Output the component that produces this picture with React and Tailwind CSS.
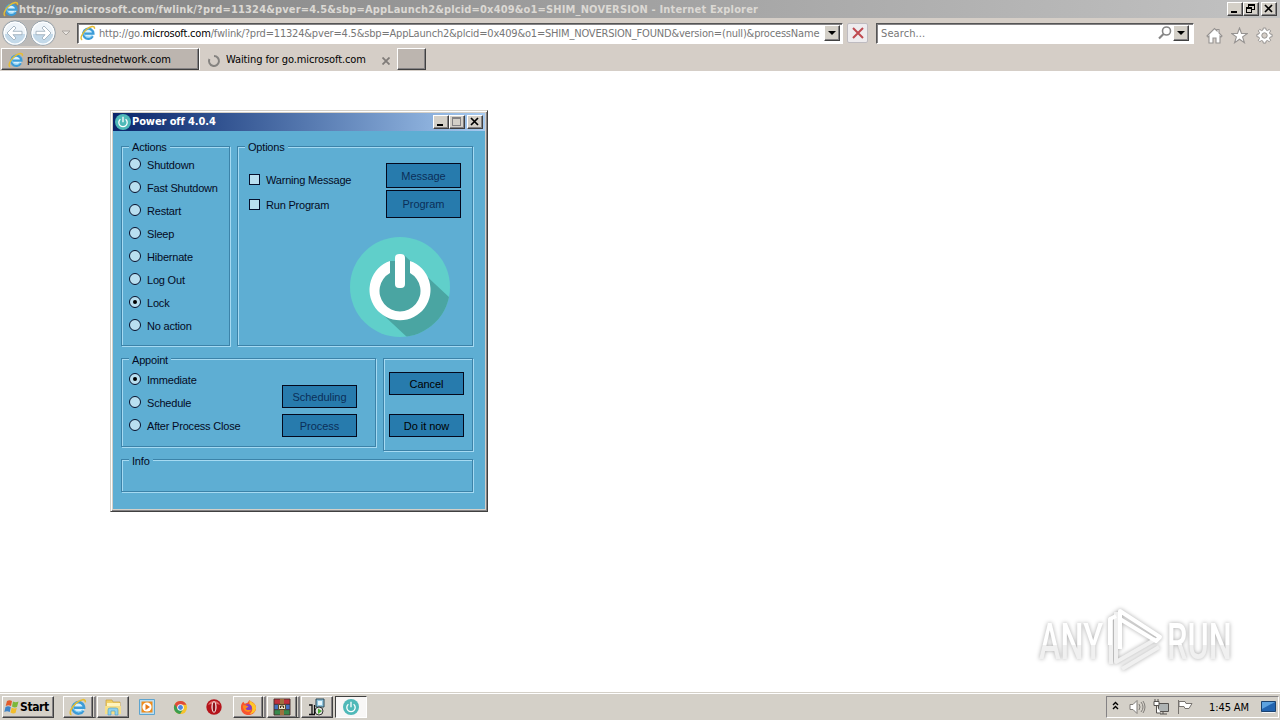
import clsx from 'clsx';

const raised =
  'border border-t-white border-l-white border-r-[#404040] border-b-[#404040] shadow-[inset_-1px_-1px_0_#848284]';

const IeIcon = ({ className }) => (
  <svg viewBox="0 0 16 16" className={className} fill="none">
    <circle cx="8" cy="8.6" r="5.6" fill="#d9f1fc" />
    <path d="M12.800 11.200a5.100 5.100 0 1 1 .6-2.600H4.200" stroke="#3c9cd8" strokeWidth="2.3" />
    <path d="M12.4 10.5A5 5 0 0 1 3.6 7" stroke="#7fcdf3" strokeWidth="0.9" />
    <path d="M2.2 14.8C-.5 14 2 8.4 6.3 4.6 10.3 1 15 .2 14.5 3.8" stroke="#e6bd33" strokeWidth="1.4" />
  </svg>
);

const PowerIcon = ({ className }) => (
  <svg viewBox="0 0 100 100" className={className}>
    <defs>
      <clipPath id="disc">
        <circle cx="50" cy="50" r="50" />
      </clipPath>
    </defs>
    <g clipPath="url(#disc)">
      <rect width="100" height="100" fill="#60cfca" />
      <path d="M54 18 L101 62 L101 101 L58 101 L29 74 L28 37 L44 25 Z" fill="#4aa5a2" />
    </g>
    <path d="M40 24 V36 A20.5 20.5 0 1 0 60 36 V24 A30.5 30.5 0 1 1 40 24" fill="#fff" />
    <path d="M40 24 H60 V38 H40 Z" fill="#4aa5a2" />
    <rect x="45" y="17" width="10" height="34" rx="4" fill="#fff" />
  </svg>
);

const SmallPower = ({ className }) => (
  <svg viewBox="0 0 16 16" className={className} fill="none" stroke="#fff" strokeWidth="1.3">
    <circle cx="8" cy="8" r="8" fill="#4fb9b8" stroke="none" />
    <path d="M5.4 5.2a4.2 4.2 0 1 0 5.2 0M8 2.7v5.5" />
  </svg>
);

const CaptionButton = ({ kind, disabled }) => (
  <div className={clsx('flex h-[14px] w-4 items-center justify-center bg-[#d4d0c8]', raised)}>
    <svg
      viewBox="0 0 12 10"
      className="h-[10px] w-3"
      fill="none"
      stroke={disabled ? '#848284' : '#000'}
      shapeRendering="crispEdges"
    >
      {kind === 'min' && <path d="M2 8h6" strokeWidth="2" />}
      {kind === 'max' && (
        <>
          <path d="M1.5 .5h8v8h-8z" />
          <path d="M1 1.5h9" />
        </>
      )}
      {kind === 'restore' && <path d="M3.5 3V.5h6v5H7M3 1h7M1.5 3.5h5v5h-5zM1 4h6" />}
      {kind === 'close' && <path d="M2 1l7 7M9 1l-7 7" strokeWidth="1.7" shapeRendering="auto" />}
    </svg>
  </div>
);

const DropButton = () => (
  <div className={clsx('flex h-4 w-4 shrink-0 items-center justify-center bg-[#d4d0c8]', raised)}>
    <svg viewBox="0 0 8 4" className="h-1 w-2">
      <path d="M0 0h8L4 4z" />
    </svg>
  </div>
);

const RoundNav = ({ forward }) => (
  <svg viewBox="0 0 26 26" className={clsx('h-[26px] w-[26px]', forward && '-scale-x-100')}>
    <circle cx="13" cy="13" r="12" fill="#eef4f9" stroke="#8d9ba6" />
    <path d="M2 14h22a11 11 0 0 1-22 0" fill="#c3d9e9" />
    <circle cx="13" cy="13" r="11" fill="none" stroke="#fff" strokeWidth="1.2" />
    <path d="M5 13l7-7 2 2-3 3.3h9v3.4h-9l3 3.3-2 2z" fill="#fff" stroke="#98aab8" strokeWidth=".8" />
  </svg>
);

const Browser = () => (
  <header className="flex h-[71px] flex-col bg-[#d5cec7]">
    <div className="flex h-[18px] items-center bg-linear-to-r from-[#828282] to-[#c2c2c2] pl-[3px] pr-[3px]">
      <IeIcon className="h-4 w-4" />
      <span className="grow whitespace-nowrap text-[11px] font-bold leading-[17px] tracking-[0.157px] text-[#dcd9d4]">
        http://go.microsoft.com/fwlink/?prd=11324&amp;pver=4.5&amp;sbp=AppLaunch2&amp;plcid=0x409&amp;o1=SHIM_NOVERSION - Internet Explorer
      </span>
      <div className="flex">
        <CaptionButton kind="min" />
        <CaptionButton kind="restore" />
      </div>
      <div className="ml-[2px]">
        <CaptionButton kind="close" />
      </div>
    </div>

    <div className="flex h-[30px] items-center pl-[2px]">
      <div className="flex rounded-full bg-[#bdbbb9]">
        <RoundNav />
        <div className="ml-[2px]">
          <RoundNav forward />
        </div>
      </div>
      <svg viewBox="0 0 10 6" className="ml-[5px] h-[6px] w-[10px]">
        <path d="M1 1h8L5 5z" fill="#e9e5e1" stroke="#aaa5a0" />
      </svg>
      <div className="ml-[6px] flex h-[21px] w-[766px] items-center border border-b-white border-l-[#555] border-r-white border-t-[#555] bg-white pl-[2px] shadow-[inset_1px_1px_0_#848284]">
        <IeIcon className="h-4 w-4" />
        <span className="ml-[3px] w-[725px] whitespace-nowrap pt-[2px] text-[11px] tracking-[-0.187px] text-[#777]">
          http://go.<span className="text-black">microsoft.com</span>
          /fwlink/?prd=11324&amp;pver=4.5&amp;sbp=AppLaunch2&amp;plcid=0x409&amp;o1=SHIM_NOVERSION_FOUND&amp;version=(null)&amp;processName
        </span>
        <DropButton />
      </div>
      <div className="ml-[4px] flex h-5 w-[21px] items-center justify-center rounded-[2px] border border-[#bebbc0] bg-[#eeecee]">
        <svg viewBox="0 0 12 12" className="h-3 w-3" stroke="#bf4a50" strokeWidth="2">
          <path d="M1 1l10 10M11 1L1 11" />
        </svg>
      </div>
      <div className="ml-2 flex h-[21px] w-[318px] items-center border border-b-white border-l-[#555] border-r-white border-t-[#555] bg-white pl-1 shadow-[inset_1px_1px_0_#848284]">
        <span className="grow pt-[2px] text-[11px] tracking-[0.1px] text-[#777]">Search...</span>
        <svg viewBox="0 0 14 14" className="mr-[1px] h-[14px] w-[14px]" fill="none" stroke="#858585" strokeWidth="1.6">
          <circle cx="8.5" cy="5" r="4" />
          <path d="M5.5 8L1 12.5" strokeWidth="2.2" />
        </svg>
        <DropButton />
        <div className="w-1" />
      </div>
      <div className="ml-[12px] mt-1 flex gap-2">
        <svg viewBox="0 0 17 17" className="h-[17px] w-[17px]" fill="#fff" stroke="#969391" strokeWidth="1.1">
          <path d="M1 9l7.5-7.5L11 4V2.5h2V6l3 3-1 1-1-.8V16h-4v-5H7v5H3V9.2L2 10z" />
        </svg>
        <svg viewBox="0 0 17 17" className="h-[17px] w-[17px]" fill="#fff" stroke="#969391" strokeWidth="1.1">
          <path d="M8.5 1l2 5.5h5.8l-4.7 3.4 1.8 5.8-4.9-3.5-4.9 3.5 1.8-5.8L.7 6.5h5.8z" />
        </svg>
        <svg viewBox="0 0 17 17" className="h-[17px] w-[17px]" fill="#fff" stroke="#969391">
          <path d="M7.3 1h2.4l.4 2 1.4.6 1.7-1.2 1.5 1.5L13.5 5.6l.6 1.4 2 .4v2.3l-2 .4-.6 1.4 1.2 1.7-1.5 1.5-1.7-1.2-1.4.6-.4 2H7.3l-.4-2-1.4-.6-1.7 1.2-1.5-1.5 1.2-1.7-.6-1.4-2-.4V7.4l2-.4.6-1.4-1.2-1.7 1.5-1.5 1.7 1.2L6.9 3z" />
          <circle cx="8.5" cy="8.5" r="2.7" fill="#d5cec7" />
        </svg>
      </div>
    </div>

    <div className="flex h-[23px] pl-px text-[11px] text-black">
      <div className={clsx('flex h-[22px] w-[198px] items-center bg-[#bcb5af] pl-[6px]', raised)}>
        <IeIcon className="mt-[2px] h-4 w-4" />
        <span className="ml-[3px] pt-[3px] tracking-[-0.14px]">profitabletrustednetwork.com</span>
      </div>
      <div className="flex h-[22px] w-[198px] items-center border-l border-white pl-[7px] pt-[3px]">
        <svg viewBox="0 0 14 14" className="h-[14px] w-[14px]" fill="none" stroke="#858380" strokeWidth="2">
          <path d="M7 2a5 5 0 1 1-4.6 3" />
        </svg>
        <span className="ml-[5px] grow tracking-[-0.1px]">Waiting for go.microsoft.com</span>
        <svg viewBox="0 0 8 8" className="mr-[7px] h-2 w-2" stroke="#807c79" strokeWidth="1.8">
          <path d="M.5 .5l7 7M7.5 .5l-7 7" />
        </svg>
      </div>
      <div className={clsx('h-[22px] w-[29px] bg-[#bcb5af]', raised)} />
    </div>
  </header>
);

const GroupBox = ({ label, labelClass = '-mt-[7px]', className, children }) => (
  <section
    className={clsx(
      'flex flex-col border border-[#3c83a9] shadow-[1px_1px_0_#a5daf2,inset_1px_1px_0_#a5daf2]',
      className,
    )}
  >
    {label && (
      <h2 className={clsx('ml-[7px] h-[14px] w-fit bg-[#5eaed3] px-[3px] leading-[14px]', labelClass)}>{label}</h2>
    )}
    {children}
  </section>
);

const Radio = ({ label, checked }) => (
  <div className="flex h-[23px] items-center">
    <span className="mb-[2px] flex h-3 w-3 items-center justify-center rounded-full border border-[#06102c] bg-[#b9dff0]">
      {checked && <span className="h-1 w-1 rounded-full bg-black" />}
    </span>
    <span className="ml-[6px]">{label}</span>
  </div>
);

const Checkbox = ({ label }) => (
  <div className="flex h-[25px] items-center">
    <span className="h-[11px] w-[11px] border border-[#06102c] bg-[#b9dff0]" />
    <span className="ml-[6px]">{label}</span>
  </div>
);

const FlatButton = ({ label, disabled, className }) => (
  <button
    className={clsx(
      'block w-[75px] border border-[#03081c] bg-[#277bad] tracking-[-0.05px]',
      disabled ? 'text-[#0b2f59]' : 'text-black',
      className,
    )}
  >
    {label}
  </button>
);

const actions = ['Shutdown', 'Fast Shutdown', 'Restart', 'Sleep', 'Hibernate', 'Log Out', 'Lock', 'No action'];
const schedules = ['Immediate', 'Schedule', 'After Process Close'];

const PowerDialog = () => (
  <div className="absolute left-[110px] top-[110px] flex h-[402px] w-[378px] flex-col border border-b-[#404040] border-l-[#d4d0c8] border-r-[#404040] border-t-[#d4d0c8] bg-[#d4d0c8] p-[2px] shadow-[inset_1px_1px_0_#fff,inset_-1px_-1px_0_#848284]">
    <div className="flex h-[18px] shrink-0 items-center bg-linear-to-r from-[#0a246a] to-[#a6caf0] pl-[2px] pr-[2px]">
      <SmallPower className="h-4 w-4" />
      <span className="ml-px grow pt-px text-[11px] font-bold tracking-[-0.1px] text-white">Power off 4.0.4</span>
      <CaptionButton kind="min" />
      <CaptionButton kind="max" disabled />
      <div className="ml-[2px]">
        <CaptionButton kind="close" />
      </div>
    </div>
    <div className="grow bg-[#5eaed3] pl-2 pt-[15px] font-['Liberation_Sans',Arial,sans-serif] text-[11px] leading-[14px] tracking-[-0.2px] text-[#040b24]">
      <div className="flex gap-[7px]">
        <GroupBox label="Actions" className="h-[200px] w-[109px]">
          <div className="ml-[7px] -mt-px">
            {actions.map((name) => (
              <Radio key={name} label={name} checked={name === 'Lock'} />
            ))}
          </div>
        </GroupBox>
        <GroupBox label="Options" className="h-[200px] w-[236px]">
          <div className="ml-[11px] mr-[11px] mt-[9px] flex justify-between">
            <div className="mt-[4px]">
              <Checkbox label="Warning Message" />
              <Checkbox label="Run Program" />
            </div>
            <div>
              <FlatButton label="Message" disabled className="h-[25px]" />
              <FlatButton label="Program" disabled className="mt-[2px] h-7" />
            </div>
          </div>
          <PowerIcon className="ml-[112px] mt-[19px] h-[100px] w-[100px]" />
        </GroupBox>
      </div>

      <div className="mt-3 flex gap-[7px]">
        <GroupBox label="Appoint" labelClass="-mt-[6px]" className="h-[89px] w-[255px]">
          <div className="ml-[7px] mr-[18px] mt-px flex justify-between">
            <div>
              {schedules.map((name) => (
                <Radio key={name} label={name} checked={name === 'Immediate'} />
              ))}
            </div>
            <div className="mt-[17px]">
              <FlatButton label="Scheduling" disabled className="h-[23px]" />
              <FlatButton label="Process" disabled className="mt-[6px] h-[23px]" />
            </div>
          </div>
        </GroupBox>
        <GroupBox className="h-[93px] w-[90px] pl-[5px]">
          <FlatButton label="Cancel" className="mt-[13px] h-[23px]" />
          <FlatButton label="Do it now" className="mt-[19px] h-[23px]" />
        </GroupBox>
      </div>

      <GroupBox label="Info" labelClass="-mt-[6px]" className="mt-2 h-[33px] w-[352px]" />
    </div>
  </div>
);

const Watermark = () => (
  <svg
    viewBox="0 0 210 80"
    className="absolute left-[1030px] top-[600px] h-[80px] w-[210px] overflow-visible drop-shadow-[0_0_2px_#aaa]"
  >
    <defs>
      <linearGradient id="fade" x1="0" y1="0" x2="0" y2="1">
        <stop offset="0.55" stopColor="#fff" />
        <stop offset="0.56" stopColor="#f0f0f0" />
      </linearGradient>
    </defs>
    <g fill="url(#fade)" fontFamily="Roboto, sans-serif" fontSize="50" fontWeight="500">
      <text transform="translate(9 59) scale(.65 1)">ANY</text>
      <text transform="translate(137 59) scale(.65 1)">RUN</text>
    </g>
    <g fill="none" strokeWidth="4" strokeLinejoin="round">
      <path d="M81 17V64M86 12V62L126 39" stroke="#f0f0f0" />
      <path d="M92 69L129 47" stroke="#f0f0f0" />
      <path d="M80 45V19l6-3M90 49V11l40 26-4 4-36-22" stroke="#fff" />
    </g>
  </svg>
);

const FolderIcon = () => (
  <svg viewBox="0 0 18 18" className="h-[18px] w-[18px]">
    <path d="M2 2h6l1 2h7v11H2z" fill="#f1cf63" stroke="#c79f3d" strokeWidth=".7" />
    <path d="M3 5h13v5H3z" fill="#fff4bd" />
    <path d="M1 8h16v8H1z" fill="#f6df88" />
    <path d="M4 17v-5q0-2 2-2h6q2 0 2 2v5h-3v-4H7v4z" fill="#8fd1ee" stroke="#479bc0" strokeWidth=".6" />
  </svg>
);

const PlayerIcon = () => (
  <svg viewBox="0 0 16 16" className="h-4 w-4">
    <path d="M.5 .5h15v15H.5z" fill="#b9def3" stroke="#5da4cf" />
    <path d="M2.500 2.500h11v11h-11z" fill="#ef8c1c" />
    <circle cx="8" cy="8" r="4.600" fill="#fff" />
    <path d="M6.500 5l4.500 3-4.500 3z" fill="#e67817" />
  </svg>
);

const ChromeIcon = () => (
  <svg viewBox="0 0 16 16" className="h-[15px] w-[15px]">
    <circle cx="8" cy="8" r="7" fill="#f6c32c" />
    <path d="M8 8L1.9 4.5A7 7 0 0 0 7.6 15L11 9.5z" fill="#3a9e50" />
    <path d="M1.9 4.5A7 7 0 0 1 14.3 5H8L5 9.5z" fill="#df493b" />
    <circle cx="8" cy="8" r="3.5" fill="#fff" />
    <circle cx="8" cy="8" r="2.6" fill="#4a86e0" />
  </svg>
);

const OperaIcon = () => (
  <svg viewBox="0 0 16 16" className="h-4 w-4">
    <circle cx="8" cy="8" r="7.700" fill="#b5141b" />
    <path d="M2 6a6.500 6.500 0 0 1 12 0q-6-3-12 0" fill="#df6a66" />
    <ellipse cx="8" cy="8" rx="2.600" ry="5.800" fill="#f5e5e3" />
    <ellipse cx="8" cy="8" rx="1.300" ry="4.800" fill="#8e1118" />
  </svg>
);

const FirefoxIcon = () => (
  <svg viewBox="0 0 18 18" className="h-[17px] w-[17px]">
    <path d="M1 9c0-3 1-5 2.5-6L5 5l3-1 2-3c1 2 6 2 7 8 0 5-3.5 8-8 8s-8-3-8-8" fill="#f9542f" />
    <path d="M10 1c1 2 7 3 7 9-1 4-4 6-7 6 4-3 4-7 0-11z" fill="#ffc629" />
    <circle cx="8.5" cy="9.5" r="4" fill="#7f3ec8" />
    <path d="M3 7c3-1 4 0 6 1l-3 2c1 2 3 2 6 1-2 5-9 3-9-4" fill="#ff8a1d" />
  </svg>
);

const WinrarIcon = () => (
  <svg viewBox="0 0 18 18" className="h-[18px] w-[18px]">
    <path d="M1 1h16v5H1z" fill="#c0303d" />
    <path d="M1 6h16v6H1z" fill="#4470c0" />
    <path d="M1 12h16v5H1z" fill="#38894c" />
    <path d="M1 1h16v16H1zM1 6.3h16M1 11.7h16" fill="none" stroke="#482a28" strokeWidth=".9" />
    <path d="M7 1h4v16H7z" fill="#a0703e" />
    <path d="M5.500 6.500h7v5h-7z" fill="#e6dfc4" stroke="#59472a" />
    <path d="M7.500 10V8h3v2" fill="none" stroke="#44321c" />
  </svg>
);

const InstallerIcon = () => (
  <svg viewBox="0 0 18 18" className="h-[18px] w-[18px]">
    <path d="M8 1h8v8H8z" fill="#8fc3dc" stroke="#284655" />
    <path d="M10 3h4v4h-4z" fill="#e5f6fc" />
    <path d="M1 7h3v9M1 16.500h6" fill="none" stroke="#111" strokeWidth="1.3" />
    <circle cx="11" cy="13" r="4" fill="#e2e2e2" stroke="#333" />
    <path d="M10 10.500l4 2.500-4 3z" fill="#4baf32" />
    <path d="M6.500 7v9" stroke="#111" strokeWidth="1.200" />
  </svg>
);

const TaskButton = ({ children, stacked, className }) => (
  <div className={clsx('flex h-[22px] items-stretch', className)}>
    <div className={clsx('flex grow items-center justify-center bg-[#d4d0c8]', raised)}>{children}</div>
    {stacked && <div className="w-[3px] border-y border-r-2 border-b-[#404040] border-r-[#848284] border-t-white" />}
  </div>
);

const Taskbar = () => (
  <footer className="flex h-7 items-center border-t border-[#d4d0c8] bg-[#d4d0c8] pl-[2px] pt-px shadow-[inset_0_1px_0_#fff]">
    <div className={clsx('flex h-[22px] w-[52px] items-center pl-px', raised)}>
      <svg viewBox="0 0 16 16" className="h-4 w-4">
        <path d="M3 2q2.500-1.500 5 0L7 7Q4.500 5.500 1.700 7z" fill="#e25b2b" />
        <path d="M9 2.500q2.500 1.300 5.500 0L13 8q-2.500 1-5-.5z" fill="#7cb83a" />
        <path d="M1.500 8Q4 6.500 6.800 8l-1 5Q3 11.500.3 13z" fill="#3d83c8" />
        <path d="M7.700 8.500Q10 10 12.800 9l-1.300 5Q9 15 6.500 13.500z" fill="#f2bd2c" />
      </svg>
      <span className="text-[12px] font-bold tracking-[-0.4px] text-black">Start</span>
    </div>
    <TaskButton stacked className="ml-[9px] w-[33px]">
      <IeIcon className="h-[18px] w-[18px]" />
    </TaskButton>
    <TaskButton className="ml-px w-8">
      <FolderIcon />
    </TaskButton>
    <div className="flex w-[104px] items-center justify-between pl-[10px] pr-[11px]">
      <PlayerIcon />
      <ChromeIcon />
      <OperaIcon />
    </div>
    <TaskButton stacked className="w-[33px]">
      <FirefoxIcon />
    </TaskButton>
    <TaskButton stacked className="ml-px w-[33px]">
      <WinrarIcon />
    </TaskButton>
    <TaskButton className="ml-px w-8">
      <InstallerIcon />
    </TaskButton>
    <div className="ml-[2px] flex h-[22px] w-8 items-center justify-center border border-b-white border-l-[#404040] border-r-white border-t-[#404040] bg-[#f8f7f6]">
      <SmallPower className="h-4 w-4" />
    </div>
    <div className="ml-auto mr-px flex h-[22px] w-[173px] items-center border border-b-white border-l-[#848284] border-r-white border-t-[#848284] pl-[5px]">
      <svg viewBox="0 0 7 9" className="mb-[3px] h-[9px] w-[7px]" fill="none" stroke="#000" strokeWidth="1.4">
        <path d="M1 4l2.500-2.500L6 4M1 8l2.500-2.500L6 8" />
      </svg>
      <svg viewBox="0 0 17 16" className="ml-[10px] h-4 w-[17px]" fill="none" stroke="#807d79">
        <path d="M1 5.500h3l4-4v13l-4-4H1z" fill="#fff" />
        <path d="M10 5q2 3 0 6M12 3q4 5 0 10M14 2q4 6 0 12" />
      </svg>
      <svg viewBox="0 0 16 16" className="ml-[7px] h-4 w-4" fill="none" stroke="#55524f">
        <path d="M5.500 4.500h10v8h-10z" fill="#aeb3b3" />
        <path d="M7 15h7M10 13v2" />
        <path d="M1 2.500h5v4H1zM2 0v2M5 0v2M3.500 7v7H8" fill="#fff" />
      </svg>
      <svg viewBox="0 0 17 16" className="ml-[7px] h-4 w-[17px]" fill="#fff" stroke="#77736f">
        <path d="M2.500 1v14M3 2.500h6l1 2h6l-3 5H9l-1-2H3z" />
      </svg>
      <span className="ml-4 whitespace-nowrap pt-[2px] text-[11px] tracking-[-0.1px] text-black">1:45 AM</span>
      <svg viewBox="0 0 15 14" className="ml-auto mr-[2px] h-[14px] w-[15px]">
        <path d="M.5 1.500h14v10H.5z" fill="#2264b0" stroke="#1b426f" />
        <path d="M1 2h13L1 9z" fill="#5da2df" />
        <path d="M1 12.500h13" stroke="#f2f5f7" />
      </svg>
    </div>
  </footer>
);

export default function App() {
  return (
    <div className="relative flex h-[720px] w-[1280px] flex-col overflow-hidden bg-white font-['DejaVu_Sans_Condensed','DejaVu_Sans',Tahoma,sans-serif]">
      <Browser />
      <main className="grow bg-white" />
      <Taskbar />
      <PowerDialog />
      <Watermark />
    </div>
  );
}
